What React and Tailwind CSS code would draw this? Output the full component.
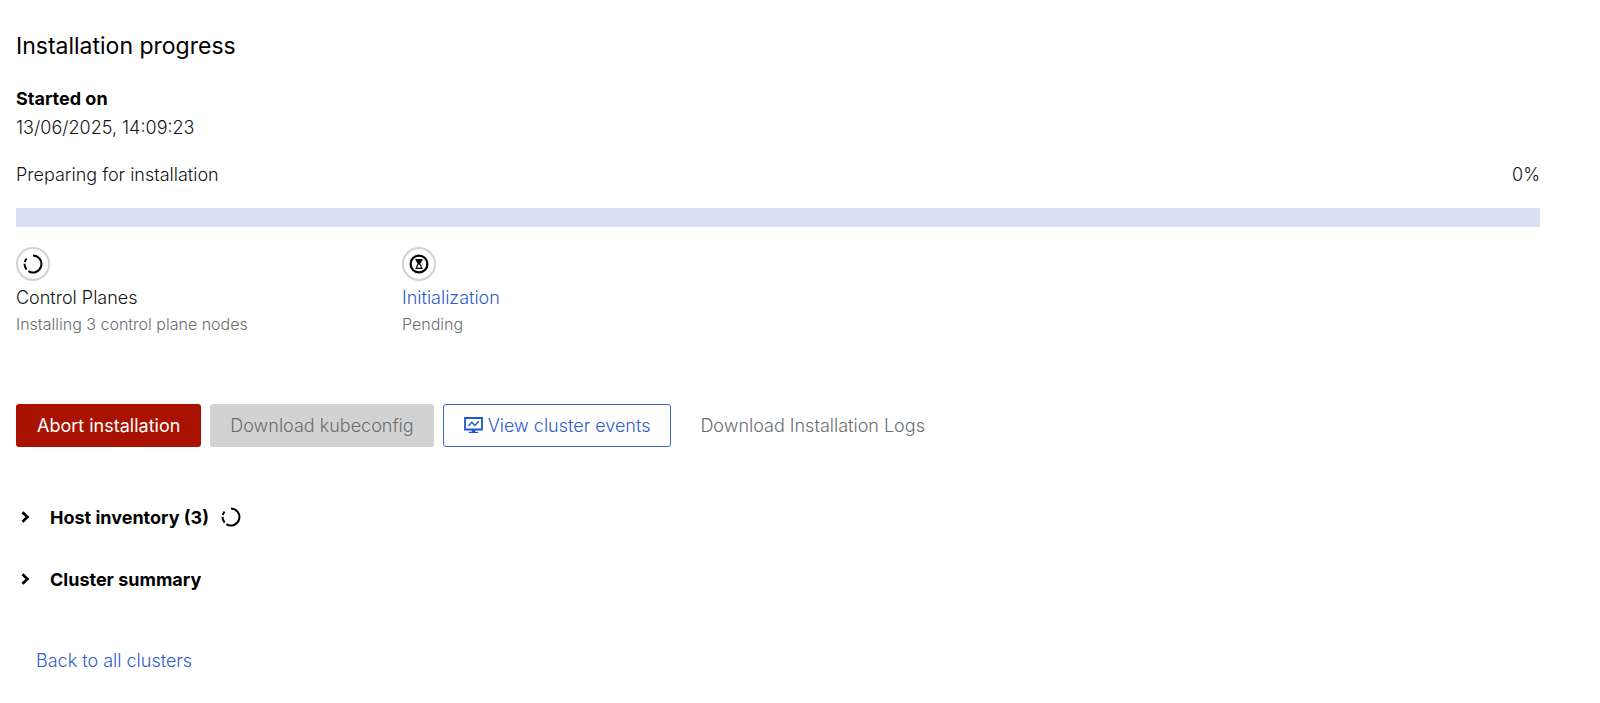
import { useState } from 'react';

const SpinnerIcon = ({ className }) => (
  <svg viewBox="0 0 20 20" className={className} fill="none" stroke="currentColor" strokeWidth="2" aria-hidden="true">
    <path d="M10 1.5A8.5 8.5 0 1 1 5.4 17.2" />
    <path d="M3.6 15.6A8.5 8.5 0 0 1 1.5 9.8" />
    <path d="M1.8 7.9A8.5 8.5 0 0 1 3.6 4.6" />
  </svg>
);

const PendingIcon = ({ className }) => (
  <svg viewBox="0 0 20 20" className={className} fill="none" stroke="currentColor" aria-hidden="true">
    <circle cx="10" cy="10" r="8.4" strokeWidth="2.2" />
    <path d="M6.4 5.7h7.2M6.4 14.4h7.2" strokeWidth="1.4" />
    <path d="M7 5.5h6c0 2.4-1.1 3.4-2.2 4.5H9.2C8.1 8.9 7 7.9 7 5.5z" fill="currentColor" stroke="none" />
    <path d="M9.5 9.8c-1.2 1-1.9 2.2-1.9 4.4M10.5 9.8c1.2 1 1.9 2.2 1.9 4.4" strokeWidth="1.3" />
  </svg>
);

const MonitoringIcon = ({ className }) => (
  <svg viewBox="0 0 19 17" className={className} fill="none" stroke="currentColor" aria-hidden="true">
    <path d="M1 1h17v11.5H1z" strokeWidth="1.8" />
    <path d="M4.5 9l3.3-3.7 3 3.2 4-4.3" strokeWidth="1.4" />
    <path d="M7.8 13h3.4v1.7h3V16H4.8v-1.3h3z" fill="currentColor" stroke="none" />
  </svg>
);

const AngleRightIcon = ({ className }) => (
  <svg viewBox="0 0 9 12" className={className} fill="none" stroke="currentColor" strokeWidth="2.8" aria-hidden="true">
    <path d="M1.5 1.2L6.4 6l-4.9 4.8" />
  </svg>
);

const ProgressStep = ({ icon, title, description }) => (
  <li>
    <div className="flex h-[34px] w-[34px] items-center justify-center rounded-full border-2 border-[#d2d2d2]">
      {icon}
    </div>
    <div className="mt-[3px] leading-7">{title}</div>
    <div className="text-base leading-6 text-[#6a6e73]">{description}</div>
  </li>
);

const ExpandableSection = ({ title, icon, children }) => {
  const [expanded, setExpanded] = useState(false);

  return (
    <section>
      <h2>
        <button
          type="button"
          aria-expanded={expanded}
          onClick={() => setExpanded(!expanded)}
          className="flex h-[62px] items-center pl-[5px] font-bold"
        >
          <AngleRightIcon className={expanded ? 'h-3 w-[9px] rotate-90' : 'h-3 w-[9px]'} />
          <span className="ml-5">{title}</span>
          {icon}
        </button>
      </h2>
      {expanded && <div className="pb-4 pl-[34px]">{children}</div>}
    </section>
  );
};

const App = () => {
  const progress = 0;

  return (
    <main className="bg-white pt-7 pr-[60px] pb-5 pl-4 font-['Inter',sans-serif] text-[18px] leading-[29px] font-light text-[#151515]">
      <h1 className="text-[23px] leading-9 font-normal text-black">Installation progress</h1>

      <dl className="mt-5">
        <dt className="font-bold text-black">Started on</dt>
        <dd>13/06/2025, 14:09:23</dd>
      </dl>

      {/* Progress */}
      <div className="mt-[18px] flex justify-between">
        <span id="progress-label">Preparing for installation</span>
        <span>{progress}%</span>
      </div>
      <div
        role="progressbar"
        aria-labelledby="progress-label"
        aria-valuenow={progress}
        aria-valuemin={0}
        aria-valuemax={100}
        className="mt-[19px] h-[19px] bg-[#d8e0f5]"
      >
        <div className="h-full bg-[#0066cc]" style={{ width: `${progress}%` }} />
      </div>

      <ol className="mt-5 grid grid-cols-4 gap-5">
        <ProgressStep
          icon={<SpinnerIcon className="h-5 w-5 text-black" />}
          title="Control Planes"
          description="Installing 3 control plane nodes"
        />
        <ProgressStep
          icon={<PendingIcon className="h-5 w-5 text-black" />}
          title={<button type="button" className="text-[#2f5bd0]">Initialization</button>}
          description="Pending"
        />
      </ol>

      {/* Actions */}
      <div className="mt-[68px] flex flex-wrap gap-[9px]">
        <button type="button" className="h-[43px] rounded-[3px] bg-[#a91200] px-[21px] font-normal text-white">
          Abort installation
        </button>
        <button type="button" disabled className="h-[43px] rounded-[3px] bg-[#d2d2d2] px-5 text-[#6a6e73]">
          Download kubeconfig
        </button>
        <button
          type="button"
          className="flex h-[43px] items-center gap-[5px] rounded-[3px] border border-[#3f66cf] px-5 text-[#2f5bd0]"
        >
          <MonitoringIcon className="h-[17px] w-[19px] text-[#1f58d0]" />
          View cluster events
        </button>
        <button type="button" disabled className="h-[43px] px-5 text-[#6a6e73]">
          Download Installation Logs
        </button>
      </div>

      <div className="mt-[39px] text-black">
        <ExpandableSection title="Host inventory (3)" icon={<SpinnerIcon className="ml-3 h-5 w-5" />}>
          3 hosts
        </ExpandableSection>
        <ExpandableSection title="Cluster summary">Preparing for installation</ExpandableSection>
      </div>

      <a href="#clusters" className="mt-[29px] inline-block px-5 py-[7px] text-[#2f5bd0]">
        Back to all clusters
      </a>
    </main>
  );
};

export default App;
